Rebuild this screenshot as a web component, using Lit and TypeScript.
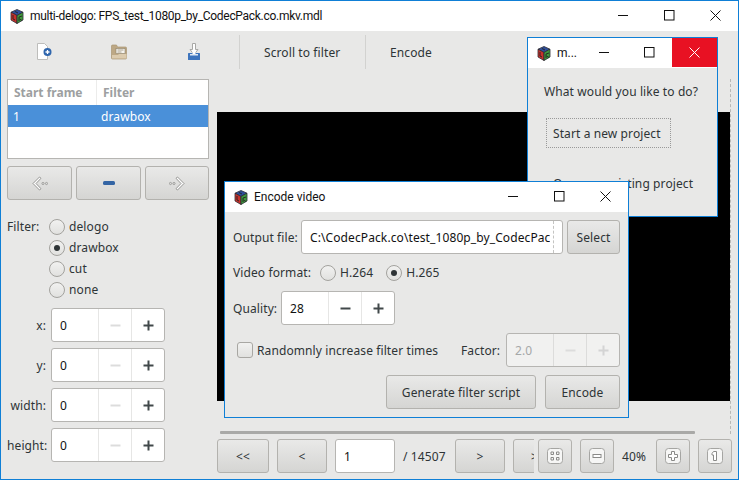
import { LitElement, html, svg, css } from "lit";
import { customElement } from "lit/decorators.js";

const logo = html`<svg class="logo" viewBox="0 0 14 15" width="14" height="15">
  <polygon points="7,0.5 13,3.2 7,6.5 1,3.2" fill="#2f4f9c" stroke="#2b2b33" stroke-width="0.8"/>
  <polygon points="1,3.2 7,6.5 7,14.5 1,11" fill="#c8322c" stroke="#2b2b33" stroke-width="0.8"/>
  <polygon points="13,3.2 7,6.5 7,14.5 13,11" fill="#3f9a3c" stroke="#2b2b33" stroke-width="0.8"/>
  <path d="M3 6v4l2 1M9 8l3-1M9 8v4M9.5 10l2.500 1.500M5 2.500l3 1.500" stroke="#222" stroke-width="0.9" fill="none"/>
</svg>`;

const winButtons = (redClose = false) => html`<div class="wctl">
  <div class="wb"><svg viewBox="0 0 11 11" width="11" height="11"><path d="M0 5.500h10" stroke="#111" fill="none"/></svg></div>
  <div class="wb"><svg viewBox="0 0 11 11" width="11" height="11"><rect x="0.500" y="0.500" width="9.500" height="9.500" stroke="#111" fill="none"/></svg></div>
  <div class="wb ${redClose ? "red" : ""}"><svg viewBox="0 0 11 11" width="11" height="11"><path d="M0.500 0.500l10 10M10.500 0.500l-10 10" stroke="${redClose ? "#fff" : "#111"}" fill="none"/></svg></div>
</div>`;

const spin = (value: string, disabled = false, minusOff = false, cls = "") => html`<div class="spin ${disabled ? "off" : ""} ${cls}">
  <div class="val">${value}</div>
  <div class="sb"><svg viewBox="0 0 11 11" width="11" height="11"><path d="M0.500 5.500h10" stroke="${disabled || minusOff ? "#dcdcdc" : "#41484a"}" stroke-width="2" fill="none"/></svg></div>
  <div class="sb"><svg viewBox="0 0 11 11" width="11" height="11"><path d="M0.500 5.500h10M5.500 0.500v10" stroke="${disabled ? "#d4d4d4" : "#41484a"}" stroke-width="2" fill="none"/></svg></div>
</div>`;

const radio = (label: string, on = false) => html`<label class="radio"><span class="dot ${on ? "on" : ""}"></span><span>${label}</span></label>`;

const arrowL = html`<svg viewBox="0 0 16 15" width="16" height="15"><path d="M7.500 1L1 7.500 7.500 14 9 12.700 4 7.500 9 2.300z" fill="#fff" stroke="#8a8a88" stroke-width="0.900"/><circle cx="11" cy="7.500" r="1.100" fill="none" stroke="#8a8a88" stroke-width="0.700"/><circle cx="14.500" cy="7.500" r="1.100" fill="none" stroke="#8a8a88" stroke-width="0.700"/></svg>`;
const arrowR = html`<svg viewBox="0 0 16 15" width="16" height="15"><path d="M8.500 1L15 7.500 8.500 14 7 12.700 12 7.500 7 2.300z" fill="#fff" stroke="#8a8a88" stroke-width="0.900"/><circle cx="5" cy="7.500" r="1.100" fill="none" stroke="#8a8a88" stroke-width="0.700"/><circle cx="1.500" cy="7.500" r="1.100" fill="none" stroke="#8a8a88" stroke-width="0.700"/></svg>`;

const zoomIcon = (inner: unknown) => html`<svg viewBox="0 0 16 16" width="16" height="16"><rect x="0.500" y="0.500" width="15" height="15" rx="3" fill="#f6f6f5" stroke="#a5a5a2"/>${inner}</svg>`;

@customElement("app-root")
export class AppRoot extends LitElement {
  static styles = css`
    :host {
      display: block;
      position: relative;
      width: 739px;
      height: 480px;
      overflow: hidden;
      font-family: "Noto Sans", sans-serif;
      font-size: 12px;
      letter-spacing: 0.1px;
      color: #2e3436;
    }
    * { box-sizing: border-box; }
    .window {
      display: flex;
      flex-direction: column;
      background: #e8e8e7;
      border: 1px solid #0f7fd6;
    }
    .main { width: 739px; height: 480px; }
    .overlay { position: absolute; }
    .small { left: 527px; top: 37px; width: 191px; height: 180px; }
    .encode { left: 224px; top: 181px; width: 405px; height: 237px; }

    .title {
      display: flex;
      align-items: center;
      height: 30px;
      flex: none;
      background: #fff;
      color: #111;
      padding-left: 9px;
    }
    .title .name {
      flex: 1;
      min-width: 0;
      margin-left: 6px;
      white-space: nowrap;
      overflow: hidden;
      font-family: Roboto, sans-serif;
      letter-spacing: 0;
    }
    .main .title .name { letter-spacing: -0.29px; }
    .logo { flex: none; }
    .wctl { display: flex; align-self: flex-start; flex: none; }
    .wb { width: 46px; height: 29px; display: flex; align-items: center; justify-content: center; }
    .wb.red { background: #e81123; }
    .small .wb { width: 45px; }

    .toolbar { display: flex; align-items: center; height: 41px; flex: none; padding-left: 5px; }
    .tool { width: 75px; height: 34px; display: flex; align-items: center; justify-content: center; }
    .sep { width: 1px; height: 34px; background: #d2d2d0; flex: none; }
    .sep.first { margin-left: 8px; }
    .textbtn { width: 125px; padding: 2px 0 0 24px; white-space: nowrap; }

    .content { display: flex; flex: 1; min-height: 0; }
    .left { width: 216px; flex: none; padding: 7px 8px 0 6px; display: flex; flex-direction: column; }

    .table { height: 80px; background: #fff; border: 1px solid #b6b5b2; flex: none; }
    .thead { display: flex; height: 25px; color: #9d9fa1; font-weight: 700; letter-spacing: 0; }
    .thead div { display: flex; align-items: center; padding-left: 6px; }
    .thead .c1 { width: 89px; border-right: 1px solid #ececeb; }
    .trow { display: flex; align-items: center; height: 22px; background: #4a90d9; color: #fff; }
    .trow .c1 { width: 93px; padding-left: 5px; }

    .arrows { display: grid; grid-template-columns: 65px 65px 64px; gap: 4px; margin-top: 7px; flex: none; }
    .btn {
      height: 34px;
      display: flex;
      align-items: center;
      justify-content: center;
      flex: none;
      white-space: nowrap;
      border: 1px solid #b3b2ae;
      border-radius: 3px;
      background: linear-gradient(#e9e9e8, #d5d5d3);
    }
    .pill { width: 12px; height: 4px; border-radius: 1.500px; background: #3465a4; }

    .filter { display: flex; margin-top: 16px; flex: none; }
    .filter .lab { width: 42px; line-height: 21px; }
    .filter .opts { display: flex; flex-direction: column; }
    .radio { display: flex; align-items: center; height: 21px; gap: 4px; white-space: nowrap; }
    .dot {
      width: 16px;
      height: 16px;
      flex: none;
      border-radius: 50%;
      border: 1px solid #a3a29e;
      background: linear-gradient(#f1f1f0, #e1e1df);
      display: flex;
      align-items: center;
      justify-content: center;
    }
    .dot.on::after { content: ""; width: 6px; height: 6px; border-radius: 50%; background: #2e3436; }

    .coords { display: flex; flex-direction: column; gap: 6px; margin-top: 8px; }
    .coord { display: flex; align-items: center; gap: 5px; }
    .coord .lab { width: 39px; text-align: right; white-space: nowrap; }

    .spin {
      display: grid;
      grid-template-columns: 1fr 33px 33px;
      width: 114px;
      height: 34px;
      flex: none;
      background: #fff;
      border: 1px solid #b6b5b2;
      border-radius: 3px;
      color: #111;
    }
    .spin .val { display: flex; align-items: center; padding-left: 8px; }
    .spin .sb { display: flex; align-items: center; justify-content: center; border-left: 1px solid #e6e6e5; }
    .spin.off { background: #f1f1f0; color: #a6a8a8; }
    .spin.off .sb { border-left-color: #dcdcdb; }

    .right { flex: 1; min-width: 0; display: flex; flex-direction: column; }
    .scroller {
      width: 514px;
      height: 355px;
      margin-top: 7px;
      flex: none;
      display: flex;
      flex-direction: column;
      border-right: 1px dashed #b8b8b6;
    }
    .video { height: 289px; margin-top: 33px; background: #000; flex: none; }
    .trough { height: 3px; width: 475px; margin: 30px 0 0 3px; background: #a9a9a7; border-radius: 1px; flex: none; }

    .bottom { display: flex; margin-top: 5px; flex: none; }
    .nav { display: flex; align-items: center; gap: 8px; width: 317px; overflow: hidden; flex: none; }
    .n52 { width: 52px; }
    .n50 { width: 50px; }
    .page { width: 60px; height: 34px; flex: none; display: flex; align-items: center; padding-left: 8px; background: #fff; border: 1px solid #b6b5b2; border-radius: 3px; color: #111; }
    .count { width: 44px; flex: none; white-space: nowrap; }
    .zoom { display: flex; align-items: center; gap: 8px; margin-left: 4px; }
    .n34 { width: 34px; }
    .pct { width: 26px; white-space: nowrap; }

    .small .body { padding: 16px 0 0 16px; display: flex; flex-direction: column; align-items: flex-start; }
    .small .line { line-height: 16px; white-space: nowrap; }
    .flat { height: 30px; width: 125px; padding-left: 6px; margin-left: 2px; display: flex; align-items: center; white-space: nowrap; border: 1px solid transparent; }
    .flat.focus { border: 1px dotted #999; margin-top: 18px; }
    .flat.next { margin-top: 20px; width: auto; }

    .encode .body { padding: 8px 8px 0; display: flex; flex-direction: column; gap: 8px; }
    .row { display: flex; align-items: center; white-space: nowrap; }
    .outlab { width: 63px; flex: none; }
    .path {
      flex: 1;
      min-width: 0;
      height: 34px;
      margin-left: 5px;
      padding-left: 8px;
      padding-right: 9px;
      display: flex;
      align-items: center;
      position: relative;
      background: #fff;
      border: 1px solid #b6b5b2;
      border-radius: 3px;
      color: #111;
      overflow: hidden;
    }
    .path span { overflow: hidden; white-space: nowrap; }
    .path::after { content: ""; position: absolute; top: 0; bottom: 0; right: 8px; border-right: 1px dashed #c4c4c2; }
    .sel { width: 53px; margin-left: 4px; }
    .row.fmt { height: 21px; }
    .row.fmt .lab { width: 87px; }
    .row.fmt .radio { margin-right: 13px; }
    .qlab { width: 43px; flex: none; }
    .quality { margin-left: 5px; }
    .check { width: 16px; height: 16px; flex: none; margin-left: 4px; border: 1px solid #a8a7a3; border-radius: 3px; background: linear-gradient(#f1f1f0, #e1e1df); }
    .chklab { margin-left: 4px; flex: 1; }
    .faclab { width: 45px; flex: none; }
    .actions { display: flex; justify-content: flex-end; gap: 9px; }
    .w150 { width: 150px; }
    .w75 { width: 75px; }
  `;

  render() {
    return html`
      <div class="window main">
        <div class="title">
          ${logo}
          <div class="name">multi-delogo: FPS_test_1080p_by_CodecPack.co.mkv.mdl</div>
          ${winButtons()}
        </div>
        <div class="toolbar">
          <div class="tool">
            <svg viewBox="0 0 16 17" width="16" height="17"><path d="M1.500 0.500h7l3 3v13h-10z" fill="#fff" stroke="#bdbdbb"/><circle cx="11.500" cy="9" r="4" fill="#2f66ad"/><path d="M9.500 9h4M11.500 7v4" stroke="#fff" stroke-width="1.300"/></svg>
          </div>
          <div class="tool">
            <svg viewBox="0 0 16 16" width="16" height="16"><path d="M0.500 2a1 1 0 0 1 1-1h4l1 2h8a1 1 0 0 1 1 1v10a1 1 0 0 1-1 1h-13a1 1 0 0 1-1-1z" fill="#bda885" stroke="#a99673" stroke-width="0.700"/><rect x="5" y="4.500" width="9" height="5" fill="#f6f4ef" stroke="#8d8068" stroke-width="0.600"/><path d="M6.500 6h6M6.500 8h4" stroke="#8d8068" stroke-width="0.700"/><path d="M1 14.500V11h6l1-1h7.500v4.500z" fill="#dccbae"/></svg>
          </div>
          <div class="tool">
            <svg viewBox="0 0 12 17" width="12" height="17"><path d="M4.500 0.500h3v6h2.500L6 11.500 2 6.500h2.500z" fill="#fff" stroke="#a8a8a6"/><rect x="0" y="10" width="12" height="7" rx="0.500" fill="#3d74bd"/><rect x="2" y="11" width="8" height="1.500" fill="#dfe8f3"/><path d="M4.500 7h3v4h-3z" fill="#fff"/></svg>
          </div>
          <div class="sep first"></div>
          <div class="textbtn">Scroll to filter</div>
          <div class="sep"></div>
          <div class="textbtn">Encode</div>
        </div>
        <div class="content">
          <div class="left">
            <div class="table">
              <div class="thead"><div class="c1">Start frame</div><div>Filter</div></div>
              <div class="trow"><div class="c1">1</div><div>drawbox</div></div>
            </div>
            <div class="arrows">
              <div class="btn">${arrowL}</div>
              <div class="btn"><div class="pill"></div></div>
              <div class="btn">${arrowR}</div>
            </div>
            <div class="filter">
              <div class="lab">Filter:</div>
              <div class="opts">
                ${radio("delogo")}${radio("drawbox", true)}${radio("cut")}${radio("none")}
              </div>
            </div>
            <div class="coords">
              ${["x:", "y:", "width:", "height:"].map((l) => html`<div class="coord"><div class="lab">${l}</div>${spin("0", false, true)}</div>`)}
            </div>
          </div>
          <div class="right">
            <div class="scroller">
              <div class="video"></div>
              <div class="trough"></div>
            </div>
            <div class="bottom">
              <div class="nav">
                <div class="btn n52">&lt;&lt;</div>
                <div class="btn n50">&lt;</div>
                <div class="page">1</div>
                <div class="count">/ 14507</div>
                <div class="btn n50">&gt;</div>
                <div class="btn n50">&gt;&gt;</div>
              </div>
              <div class="zoom">
                <div class="btn n34">${zoomIcon(svg`<path d="M4 4h2.500v2.500H4zM9.500 4H12v2.500H9.500zM4 9.500h2.500V12H4zM9.500 9.500H12V12H9.500z" fill="none" stroke="#8a8a88"/>`)}</div>
                <div class="btn n34">${zoomIcon(svg`<rect x="4" y="6.500" width="8" height="3" fill="#fff" stroke="#8a8a88"/>`)}</div>
                <div class="pct">40%</div>
                <div class="btn n34">${zoomIcon(svg`<path d="M6.500 3.500h3v3h3v3h-3v3h-3v-3h-3v-3h3z" fill="#fff" stroke="#8a8a88"/>`)}</div>
                <div class="btn n34">${zoomIcon(svg`<path d="M6.500 3.500h3v9h-3V7H5V5.500z" fill="#fff" stroke="#8a8a88"/>`)}</div>
              </div>
            </div>
          </div>
        </div>
      </div>

      <div class="window overlay small">
        <div class="title">
          ${logo}
          <div class="name">m...</div>
          ${winButtons(true)}
        </div>
        <div class="body">
          <div class="line">What would you like to do?</div>
          <div class="flat focus">Start a new project</div>
          <div class="flat next">Open an existing project</div>
        </div>
      </div>

      <div class="window overlay encode">
        <div class="title">
          ${logo}
          <div class="name">Encode video</div>
          ${winButtons()}
        </div>
        <div class="body">
          <div class="row">
            <div class="outlab">Output file:</div>
            <div class="path"><span>C:\\CodecPack.co\\test_1080p_by_CodecPac</span></div>
            <div class="btn sel">Select</div>
          </div>
          <div class="row fmt">
            <div class="lab">Video format:</div>
            ${radio("H.264")}${radio("H.265", true)}
          </div>
          <div class="row">
            <div class="qlab">Quality:</div>
            ${spin("28", false, false, "quality")}
          </div>
          <div class="row">
            <div class="check"></div>
            <div class="chklab">Randomnly increase filter times</div>
            <div class="faclab">Factor:</div>
            ${spin("2.0", true)}
          </div>
          <div class="actions">
            <div class="btn w150">Generate filter script</div>
            <div class="btn w75">Encode</div>
          </div>
        </div>
      </div>
    `;
  }
}
